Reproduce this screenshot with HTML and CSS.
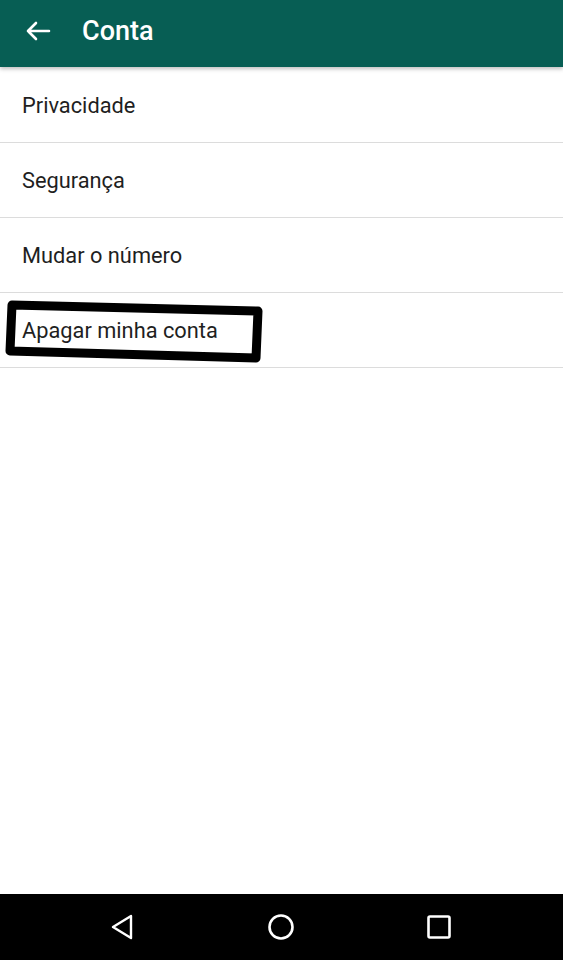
FILE: index.html
```html
<!DOCTYPE html>
<html lang="pt">
<head>
<meta charset="utf-8">
<link rel="stylesheet" href="styles.css">
</head>
<body>
<div class="screen">
  <header class="appbar">
    <svg class="back" width="26" height="22" viewBox="0 0 26 22"><path d="M24 11H3M11 3L3 11L11 19" fill="none" stroke="#fff" stroke-width="2.6" stroke-linecap="round" stroke-linejoin="round"/></svg>
    <span class="title">Conta</span>
  </header>
  <main class="list">
    <div class="row">Privacidade</div>
    <div class="row">Segurança</div>
    <div class="row">Mudar o número</div>
    <div class="row">Apagar minha conta</div>
  </main>
  <svg class="mark" width="563" height="380" viewBox="0 0 563 380"><path d="M12 305 L258 311 L256 358 L10 351 Z" fill="none" stroke="#000" stroke-width="9" stroke-linejoin="round"/></svg>
  <nav class="navbar">
    <svg width="26" height="28" viewBox="0 0 26 28"><path d="M21 3 L3 14 L21 25 Z" fill="none" stroke="#fff" stroke-width="2.4" stroke-linejoin="round"/></svg>
    <svg width="26" height="28" viewBox="0 0 26 28"><circle cx="13" cy="14" r="11.5" fill="none" stroke="#fff" stroke-width="2.6"/></svg>
    <svg width="26" height="28" viewBox="0 0 26 28"><rect x="2.5" y="3.5" width="21" height="21" rx="1.5" fill="none" stroke="#fff" stroke-width="2.6"/></svg>
  </nav>
</div>
</body>
</html>
```
FILE: styles.css
```css
* { box-sizing: border-box; }
html, body { margin: 0; padding: 0; }
body { font-family: Roboto, "Noto Sans", sans-serif; background: #fff; }
.screen { position: relative; width: 563px; height: 960px; display: flex; flex-direction: column; overflow: hidden; }
.appbar { height: 67px; background: #075e54; display: flex; align-items: center; padding-left: 25px; box-shadow: 0 2px 4px rgba(0,0,0,0.25); position: relative; z-index: 1; }
.back { margin-right: 31px; margin-top: -6px; }
.title { color: #fff; font-size: 27px; font-weight: 500; margin-top: -6px; }
.list { flex: 1; padding-top: 1px; }
.row { height: 75px; border-bottom: 1px solid #dcdcdc; display: flex; align-items: center; padding-left: 22px; font-size: 21.8px; color: #1f1f1f; }
.mark { position: absolute; left: 0; top: 0; }
.navbar { height: 66px; background: #000; display: flex; align-items: center; justify-content: center; gap: 132px; padding-right: 2px; }
.navbar svg { display: block; }
```
